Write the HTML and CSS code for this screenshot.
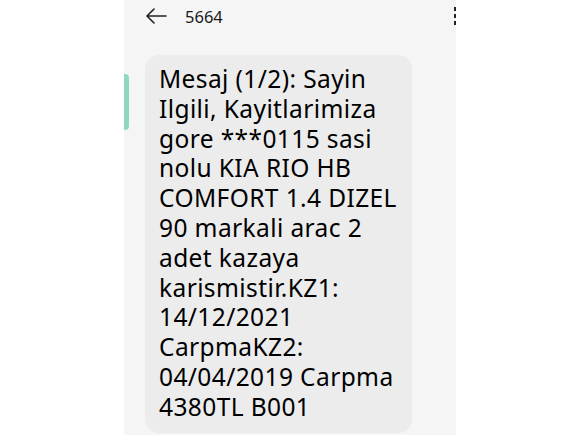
FILE: index.html
```html
<html>
<head>
  <title>5664</title>
  <link rel="stylesheet" href="styles.css">
</head>
<body>
  <div class="screen">
    <span class="scroll_mark"></span>
    <header class="topbar">
      <svg class="back" width="22" height="16" viewBox="0 0 22 16">
        <path d="M21 8H2M9 1L2 8l7 7" fill="none" stroke="#222" stroke-width="1.6" stroke-linecap="round" stroke-linejoin="round"/>
      </svg>
      <span class="sender">5664</span>
      <div class="menu">
        <i></i><i></i><i></i>
      </div>
    </header>
    <div class="thread">
      <div class="bubble">Mesaj (1/2): Sayin Ilgili, Kayitlarimiza gore ***0115 sasi nolu KIA RIO HB COMFORT 1.4 DIZEL 90 markali arac 2 adet kazaya karismistir.KZ1: 14/12/2021 CarpmaKZ2: 04/04/2019 Carpma 4380TL B001</div>
    </div>
  </div>
</body>
</html>
```

FILE: styles.css
```css
* {
  margin: 0;
  box-sizing: border-box;
  font-family: "Noto Sans", "Open Sans", sans-serif;
}

body {
  background: #fff;
  height: 435px;
  overflow: hidden;
  display: flex;
  justify-content: center;
}

.screen {
  position: relative;
  width: 332px;
  height: 100%;
  background: #f5f5f5;
  overflow: hidden;
}

.scroll_mark {
  position: absolute;
  left: -3px;
  top: 74px;
  width: 8px;
  height: 56px;
  border-radius: 4px;
  background: #8fdabf;
}

.topbar {
  display: flex;
  align-items: center;
  height: 32px;
  padding-left: 21px;
}

.back {
  margin-right: 18px;
}

.sender {
  font-size: 16.5px;
  color: #1a1a1a;
}

.menu {
  margin-left: auto;
  margin-right: -2px;
  display: flex;
  flex-direction: column;
  gap: 3px;
}

.menu i {
  width: 4px;
  height: 4px;
  background: #222;
}

.thread {
  padding: 23px 44px 0 21px;
}

.bubble {
  background: #ececec;
  border-radius: 14px;
  padding: 9px 12px 10px 14px;
  font-size: 24.5px;
  letter-spacing: 0.4px;
  line-height: 29.8px;
  color: #000;
  height: 378px;
}
```
